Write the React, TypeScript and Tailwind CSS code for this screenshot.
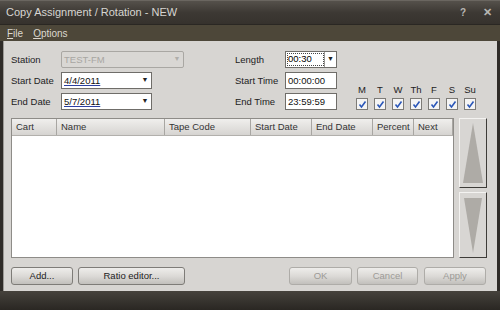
import React from "react";

const font = { fontFamily: '"Liberation Sans", Arial, sans-serif' };

function Field({ value, w, dropdown, disabled, underline }: { value: string; w: number; dropdown?: boolean; disabled?: boolean; underline?: boolean }) {
  return (
    <div
      className={
        "h-[17px] flex items-center border " +
        (disabled ? "border-[#a9a7a3] bg-[#d9d7d4] rounded-[2px]" : "border-[#6f6d69] bg-white")
      }
      style={{ width: w }}
    >
      <span
        className={
          "flex-1 pl-[2px] text-[9.5px] leading-none " +
          (disabled ? "text-[#a8a6a2]" : "text-[#111]") +
          (underline ? " underline decoration-[#2b3fa0]" : "")
        }
      >
        {value}
      </span>
      {dropdown && (
        <span className={"w-[12px] flex items-center justify-center text-[7px] " + (disabled ? "text-[#b0aeaa]" : "text-[#222]")}>▼</span>
      )}
    </div>
  );
}

function Label({ children, w = 50 }: { children: React.ReactNode; w?: number }) {
  return (
    <span className="text-[9.5px] text-[#222] leading-none" style={{ width: w }}>
      {children}
    </span>
  );
}

function Check() {
  return (
    <div className="w-[12px] h-[12px] border border-[#7d7b77] bg-[#f4f4f4] flex items-center justify-center">
      <svg width="9" height="9" viewBox="0 0 9 9">
        <path d="M1.5 4.5 L3.5 7 L7.5 1.5" stroke="#2a56b8" strokeWidth="1.6" fill="none" />
      </svg>
    </div>
  );
}

function Btn({ children, w, disabled }: { children: React.ReactNode; w: number; disabled?: boolean }) {
  return (
    <div
      className={
        "h-[18px] flex items-center justify-center rounded-[3px] border text-[9.5px] bg-gradient-to-b from-[#eeedeb] via-[#dcdad7] to-[#c2c0bc] " +
        (disabled ? "border-[#aeaca8] text-[#9c9a96]" : "border-[#7e7c78] text-[#222]")
      }
      style={{ width: w }}
    >
      {children}
    </div>
  );
}

const cols: [string, number][] = [
  ["Cart", 45],
  ["Name", 108],
  ["Tape Code", 86],
  ["Start Date", 61],
  ["End Date", 61],
  ["Percent", 41],
  ["Next", 39],
];

export default function App() {
  return (
    <div className="w-[500px] h-[310px] flex flex-col bg-[#2f2c28]" style={font}>
      <div className="h-[24px] flex items-center pl-[6px] pr-[8px] bg-gradient-to-b from-[#55514b] via-[#3d3934] to-[#36322d] border-t border-[#6a6660]">
        <span className="text-[11px] text-[#d8d6d2] flex-1">Copy Assignment / Rotation - NEW</span>
        <span className="text-[10px] font-bold text-[#b8b6b2] mr-[17px]">?</span>
        <span className="text-[11px] font-bold text-[#b8b6b2]">✕</span>
      </div>
      <div className="h-[17px] flex items-center gap-[10px] pl-[7px] bg-[#4d4739] border-t border-[#2a2723]">
        <span className="text-[10px] text-[#dcd8cf]"><span className="underline">F</span>ile</span>
        <span className="text-[10px] text-[#dcd8cf]"><span className="underline">O</span>ptions</span>
      </div>
      <div className="flex-1 flex px-[3px]">
        <div className="flex-1 flex flex-col bg-[#d7d5d2] pl-[7px] pr-[9px] pt-[10px] border-l border-[#9c9a96]">
          <div className="flex h-[60px]">
            <div className="w-[224px] flex flex-col gap-[4px]">
              <div className="flex items-center">
                <Label>Station</Label>
                <Field value="TEST-FM" w={123} dropdown disabled />
              </div>
              <div className="flex items-center">
                <Label>Start Date</Label>
                <Field value="4/4/2011" w={91} dropdown underline />
              </div>
              <div className="flex items-center">
                <Label>End Date</Label>
                <Field value="5/7/2011" w={91} dropdown underline />
              </div>
            </div>
            <div className="w-[121px] flex flex-col gap-[4px]">
              <div className="flex items-center">
                <Label>Length</Label>
                <div className="h-[17px] w-[52px] flex border border-[#6f6d69] bg-white">
                  <span className="flex-1 pl-[2px] text-[9.5px] flex items-center border-r border-[#9a9894] outline outline-1 outline-dotted outline-[#444] -outline-offset-2">00:30</span>
                  <span className="w-[11px] flex items-center justify-center text-[7px] text-[#222]">▼</span>
                </div>
              </div>
              <div className="flex items-center">
                <Label>Start Time</Label>
                <Field value="00:00:00" w={52} />
              </div>
              <div className="flex items-center">
                <Label>End Time</Label>
                <Field value="23:59:59" w={52} />
              </div>
            </div>
            <div className="flex gap-[6px] self-end mb-[1px]">
              {["M", "T", "W", "Th", "F", "S", "Su"].map((d) => (
                <div key={d} className="flex flex-col items-center gap-[4px] w-[12px]">
                  <span className="text-[9.5px] text-[#222] leading-none">{d}</span>
                  <Check />
                </div>
              ))}
            </div>
          </div>
          <div className="flex mt-[7px] h-[140px] gap-[5px]">
            <div className="w-[443px] flex flex-col border border-[#8e8c88] bg-white">
              <div className="h-[17px] flex bg-gradient-to-b from-[#f0efed] to-[#d6d4d1] border-b border-[#b2b0ac]">
                {cols.map(([c, w]) => (
                  <div key={c} className="flex items-center pl-[4px] border-r border-[#a8a6a2] text-[9.5px] text-[#333]" style={{ width: w }}>
                    {c}
                  </div>
                ))}
              </div>
            </div>
            <div className="w-[28px] flex flex-col gap-[4px]">
              <div className="h-[70px] border border-[#f4f3f1] border-r-[#3e3c38] border-b-[#3e3c38] bg-[#d8d6d3] flex justify-center">
                <svg width="22" height="66" viewBox="0 0 22 66">
                  <polygon points="11,4 1,64 21,64" fill="#aeaba6" />
                </svg>
              </div>
              <div className="flex-1 border border-[#f4f3f1] border-r-[#3e3c38] border-b-[#3e3c38] bg-[#d8d6d3] flex justify-center">
                <svg width="20" height="62" viewBox="0 0 20 62">
                  <polygon points="1,5 19,5 10,60" fill="#aeaba6" />
                </svg>
              </div>
            </div>
          </div>
          <div className="flex mt-[9px] items-center">
            <Btn w={62}>Add...</Btn>
            <div className="w-[5px]" />
            <Btn w={107}>Ratio editor...</Btn>
            <div className="w-[104px]" />
            <Btn w={63} disabled>OK</Btn>
            <div className="w-[5px]" />
            <Btn w={61} disabled>Cancel</Btn>
            <div className="w-[6px]" />
            <Btn w={62} disabled>Apply</Btn>
          </div>
        </div>
      </div>
      <div className="h-[19px] bg-gradient-to-b from-[#46423c] to-[#2a2723]" />
    </div>
  );
}
